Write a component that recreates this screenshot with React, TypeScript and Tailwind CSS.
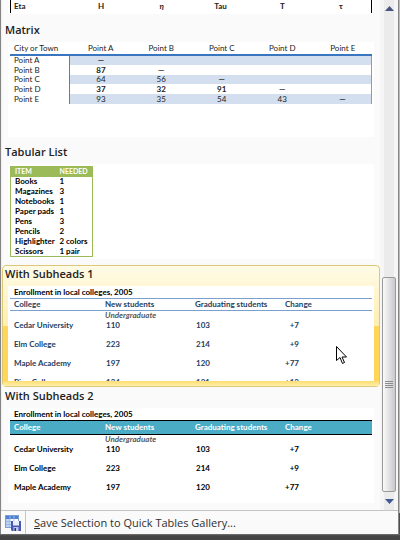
import type { ReactNode } from "react";

const points = ["A", "B", "C", "D", "E"];
const matrix = [
  ["—", "", "", "", ""],
  ["87", "—", "", "", ""],
  ["64", "56", "—", "", ""],
  ["37", "32", "91", "—", ""],
  ["93", "35", "54", "43", "—"],
];
const supplies = [
  ["Books", "1"],
  ["Magazines", "3"],
  ["Notebooks", "1"],
  ["Paper pads", "1"],
  ["Pens", "3"],
  ["Pencils", "2"],
  ["Highlighter", "2 colors"],
  ["Scissors", "1 pair"],
];
const colleges = [
  ["Cedar University", "110", "103", "+7"],
  ["Elm College", "223", "214", "+9"],
  ["Maple Academy", "197", "120", "+77"],
];
const clippedCollege = ["Pine College", "134", "121", "+13"];

function GalleryItem({ title, active = false, children }: { title: string; active?: boolean; children: ReactNode }) {
  return (
    <section
      className={
        active
          ? "flex h-[122px] flex-col rounded-sm border border-[#dcc878] bg-linear-to-b from-[#fffbe6] from-0% via-[#ffeeb0] via-50% to-[#ffd658] to-50% px-[5px]"
          : "h-[122px] border border-transparent px-[5px]"
      }
    >
      <h3 className="-ml-[3px] h-5 shrink-0 font-['Open_Sans','Noto_Sans',sans-serif] text-[11px] leading-4 font-semibold text-[#222]">
        <button type="button" className="block">{title}</button>
      </h3>
      <div className="h-[95px] shrink-0 overflow-hidden bg-white px-[2px]">{children}</div>
      {active && <div className="-mx-[5px] flex-1 bg-linear-to-b from-[#ffdc70] to-[#fff0a8]" />}
    </section>
  );
}

function MatrixTable() {
  return (
    <table className="w-full table-fixed border-collapse text-center text-[8px] leading-[9px] text-[#222]">
      <colgroup>
        <col className="w-[59px]" />
        <col /><col /><col /><col /><col />
      </colgroup>
      <thead>
        <tr className="h-[13px] border-b-2 border-[#3a76c0]">
          <th className="pl-1 text-left font-normal whitespace-nowrap">City or Town</th>
          {points.map((p) => <th key={p} className="pl-[3px] font-normal">Point {p}</th>)}
        </tr>
      </thead>
      <tbody>
        {matrix.map((row, i) => (
          <tr key={points[i]} className={i === 2 ? "h-[9px]" : "h-[10px]"}>
            <th className="border-r border-[#4f81bd] pl-1 text-left font-normal">Point {points[i]}</th>
            {row.map((v, j) => (
              <td
                key={j}
                className={`pl-[3px] ${i % 2 === 0 ? "bg-[#d3dfee]" : ""} ${i % 2 === 1 || v === "—" ? "font-bold" : ""} ${j === 4 ? "border-r border-[#7ba0d0]" : ""}`}
              >
                {v}
              </td>
            ))}
          </tr>
        ))}
      </tbody>
    </table>
  );
}

function SuppliesTable() {
  return (
    <div className="pt-[2px]">
      <table className="w-[83px] table-fixed border-collapse border border-[#9bbb59] text-left text-[8px] leading-[9px] font-bold text-black">
        <thead>
          <tr className="h-[10px] bg-[#9bbb59] text-[7px] text-white">
            <th className="w-[49px] pl-1">ITEM</th>
            <th>NEEDED</th>
          </tr>
        </thead>
        <tbody>
          {supplies.map(([item, n]) => (
            <tr key={item} className="h-[10px] last:h-[9px]">
              <td className="pl-1">{item}</td>
              <td className="whitespace-nowrap">{n}</td>
            </tr>
          ))}
        </tbody>
      </table>
    </div>
  );
}

function CollegeTable({ banded }: { banded: boolean }) {
  const rows = banded ? colleges : [...colleges, clippedCollege];
  return (
    <table className={`w-full table-fixed border-collapse text-left text-[8px] leading-[9px] font-bold ${banded ? "text-black" : "text-[#244061]"}`}>
      <caption className="h-3 pt-[2px] pl-1 text-left text-black">Enrollment in local colleges, 2005</caption>
      <colgroup>
        <col className="w-[95px]" />
        <col className="w-[90px]" />
        <col className="w-[90px]" />
        <col />
      </colgroup>
      <thead>
        <tr className={banded ? "h-[14px] border-y border-black bg-[#4bacc6] text-white" : "h-[12px] border-y border-[#7ba0cd]"}>
          <th className="pl-1">College</th>
          <th>New students</th>
          <th>Graduating students</th>
          <th>Change</th>
        </tr>
      </thead>
      <tbody>
        <tr className="h-[10px] text-[#595959] italic">
          <td />
          <td>Undergraduate</td>
          <td />
          <td />
        </tr>
        {rows.map(([name, a, b, c]) => (
          <tr key={name} className="h-[19px] align-top">
            <td className="pl-1">{name}</td>
            <td className="pl-px">{a}</td>
            <td className="pl-px">{b}</td>
            <td><span className="block w-[14px] text-right">{c}</span></td>
          </tr>
        ))}
      </tbody>
    </table>
  );
}

function Scrollbar() {
  return (
    <div className="flex w-[18px] shrink-0 flex-col items-center border-x-4 border-[#f6f6f6] bg-[#ebebeb]">
      <button type="button" aria-label="Scroll up" className="flex h-[17px] w-full items-center justify-center">
        <svg width="9" height="5" viewBox="0 0 9 5"><path d="M4.500 0 9 5H0Z" fill="#45557f" /></svg>
      </button>
      <div className="flex flex-1 flex-col justify-end">
        <div className="-mx-[2px] flex h-[215px] w-[14px] flex-col items-center justify-center gap-px rounded-xs border border-[#999] bg-linear-to-r from-[#fbfbfb] to-[#c9c9cd]">
          <i className="h-px w-2 bg-[#8c8c8c]" />
          <i className="h-px w-2 bg-[#8c8c8c]" />
          <i className="h-px w-2 bg-[#8c8c8c]" />
          <i className="h-px w-2 bg-[#8c8c8c]" />
        </div>
      </div>
      <button type="button" aria-label="Scroll down" className="flex h-[18px] w-full items-center justify-center">
        <svg width="9" height="5" viewBox="0 0 9 5"><path d="M4.500 5 9 0H0Z" fill="#3d5a92" /></svg>
      </button>
    </div>
  );
}

function SaveIcon() {
  return (
    <svg width="16" height="16" viewBox="0 0 16 16">
      <rect x="0.500" y="0.500" width="13" height="12" fill="#fff" stroke="#7d9fd6" />
      <path d="M1 1h12v3H1z" fill="#4f7fd0" />
      <path d="M1 4h4v8H1z" fill="#bcd3f3" />
      <path d="M1 6.500h12M1 9.500h12M5 1v11M9 1v11" stroke="#9ab8e6" fill="none" />
      <path d="M6 6h10v10H7l-1-1z" fill="#4a58b4" />
      <path d="M8 6h6v4.500H8z" fill="#e9eefb" />
      <path d="M8.500 12h5v4h-5z" fill="#b9c4ea" />
      <path d="M9.500 13h1.500v3H9.500z" fill="#26327c" />
    </svg>
  );
}

export default function App() {
  return (
    <main className="min-h-screen bg-linear-to-b from-[#b9bcc4] from-95% to-[#4e4e50] to-95% pr-px font-[Lato,Calibri,sans-serif]">
      <div className="border-r border-l border-r-[#858585] border-l-[#858585] bg-[#fafafa]">
        <div className="flex h-[510px] overflow-hidden border-l border-[#f0f0f0]">
          <div className="min-w-0 flex-1">
            <div className="h-[21px] px-[6px]">
              <div className="h-[14px] overflow-hidden bg-white px-[2px]">
                <table className="w-full table-fixed border-x border-black text-center text-[8px] leading-[9px] font-bold text-[#222]">
                  <tbody>
                    <tr className="h-[13px]">
                      <td className="w-[59px] pl-[3px] text-left">Eta</td>
                      <td className="pl-[3px]">Η</td>
                      <td className="pl-[3px] italic">η</td>
                      <td>Tau</td>
                      <td className="pl-[3px]">Τ</td>
                      <td>τ</td>
                    </tr>
                  </tbody>
                </table>
              </div>
            </div>
            <GalleryItem title="Matrix"><MatrixTable /></GalleryItem>
            <GalleryItem title="Tabular List"><SuppliesTable /></GalleryItem>
            <GalleryItem title="With Subheads 1" active><CollegeTable banded={false} /></GalleryItem>
            <GalleryItem title="With Subheads 2"><CollegeTable banded /></GalleryItem>
          </div>
          <Scrollbar />
        </div>
        <button
          type="button"
          className="flex h-6 w-full items-center border-t border-[#c4c4c4] text-left font-['Open_Sans','Noto_Sans',sans-serif] text-[11px] leading-4 text-[#2f2f2f]"
        >
          <span className="flex w-[25px] justify-center self-stretch border-r border-[#c8c8c8] pt-1"><SaveIcon /></span>
          <span className="pl-2"><u>S</u>ave Selection to Quick Tables Gallery...</span>
        </button>
      </div>
      <div className="-mr-px h-[6px] bg-linear-to-b from-[#777] to-[#444] to-30%" />
      <svg className="pointer-events-none absolute top-[346px] left-[336px]" width="12" height="18" viewBox="0 0 12 18">
        <path d="M0.500 0.500v14l3.500-3 2.500 6 2-1-2.500-5.500h4.500z" fill="#fff" stroke="#000" />
      </svg>
    </main>
  );
}
